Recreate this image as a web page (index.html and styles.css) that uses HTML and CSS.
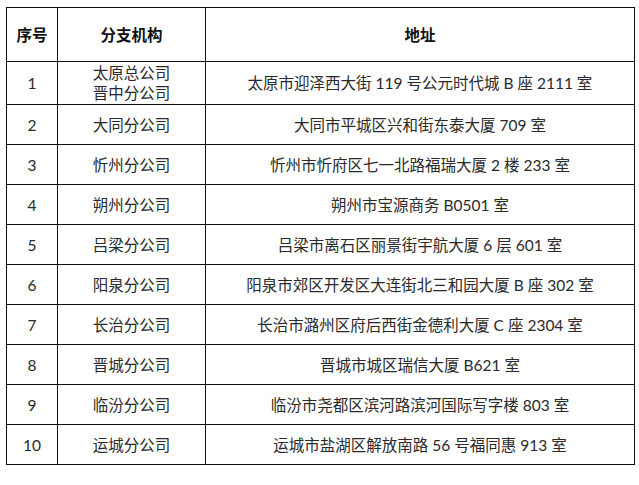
FILE: index.html
```html
<!DOCTYPE html>
<html lang="zh-CN">
<head>
<meta charset="utf-8">
<title>分支机构地址</title>
<link rel="stylesheet" href="styles.css">
</head>
<body>
<table class="branches">
  <colgroup>
    <col class="c-no">
    <col class="c-name">
    <col class="c-addr">
  </colgroup>
  <thead>
    <tr class="head">
      <th>序号</th>
      <th>分支机构</th>
      <th>地址</th>
    </tr>
  </thead>
  <tbody>
    <tr class="tall">
      <td>1</td>
      <td>太原总公司<br>晋中分公司</td>
      <td>太原市迎泽西大街 119 号公元时代城 B 座 2111 室</td>
    </tr>
    <tr><td>2</td><td>大同分公司</td><td>大同市平城区兴和街东泰大厦 709 室</td></tr>
    <tr><td>3</td><td>忻州分公司</td><td>忻州市忻府区七一北路福瑞大厦 2 楼 233 室</td></tr>
    <tr><td>4</td><td>朔州分公司</td><td>朔州市宝源商务 B0501 室</td></tr>
    <tr><td>5</td><td>吕梁分公司</td><td>吕梁市离石区丽景街宇航大厦 6 层 601 室</td></tr>
    <tr><td>6</td><td>阳泉分公司</td><td>阳泉市郊区开发区大连街北三和园大厦 B 座 302 室</td></tr>
    <tr><td>7</td><td>长治分公司</td><td>长治市潞州区府后西街金德利大厦 C 座 2304 室</td></tr>
    <tr><td>8</td><td>晋城分公司</td><td>晋城市城区瑞信大厦 B621 室</td></tr>
    <tr><td>9</td><td>临汾分公司</td><td>临汾市尧都区滨河路滨河国际写字楼 803 室</td></tr>
    <tr><td>10</td><td>运城分公司</td><td>运城市盐湖区解放南路 56 号福同惠 913 室</td></tr>
  </tbody>
</table>
</body>
</html>
```

FILE: styles.css
```css
html, body {
  margin: 0;
  padding: 0;
  background: #ffffff;
}

body {
  padding: 7px 0 0 6px;
  font-family: Lato, "Noto Sans CJK SC", sans-serif;
  color: #2a2a2a;
}

.branches {
  border-collapse: collapse;
  table-layout: fixed;
  width: 628px;
  font-size: 15.5px;
}

.c-no { width: 51px; }
.c-name { width: 148px; }
.c-addr { width: 429px; }

.branches th,
.branches td {
  border: 1px solid #111111;
  padding: 0;
  text-align: center;
  vertical-align: middle;
  line-height: 20px;
  height: 39px;
}

.branches th {
  font-weight: bold;
  color: #111111;
  height: 53px;
}

.branches tr.tall td {
  height: 42px;
}
```
